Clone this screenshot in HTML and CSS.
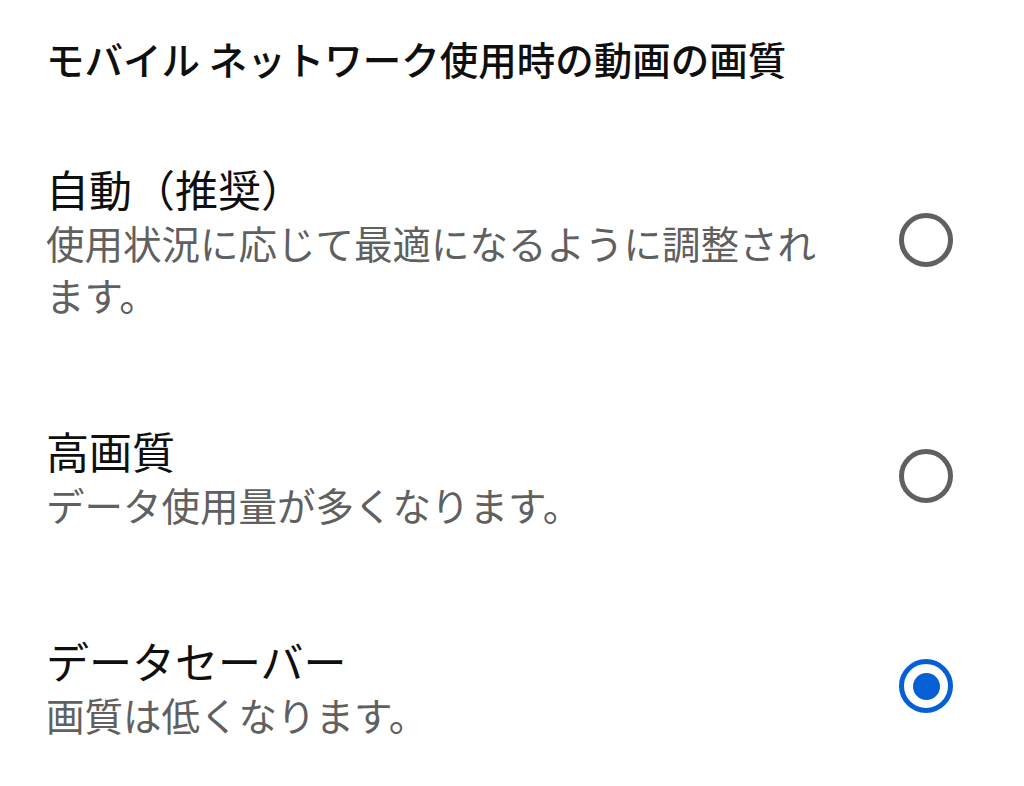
FILE: index.html
```html
<!DOCTYPE html>
<html lang="ja">
<head>
    <meta charset="UTF-8">
    <meta name="viewport" content="width=device-width, initial-scale=1.0">
    <title>動画の画質</title>
    <link rel="stylesheet" href="styles.css">
</head>
<body>

    <h1 class="section-title">モバイル ネットワーク使用時の動画の画質</h1>

    <div class="option-list">
        <label class="option">
            <div class="option-text">
                <div class="option-title">自動（推奨）</div>
                <div class="option-desc">使用状況に応じて最適になるように調整されます。</div>
            </div>
            <span class="radio"></span>
        </label>

        <label class="option">
            <div class="option-text">
                <div class="option-title">高画質</div>
                <div class="option-desc">データ使用量が多くなります。</div>
            </div>
            <span class="radio"></span>
        </label>

        <label class="option">
            <div class="option-text">
                <div class="option-title">データセーバー</div>
                <div class="option-desc">画質は低くなります。</div>
            </div>
            <!-- option sélectionnée -->
            <span class="radio checked"></span>
        </label>
    </div>

</body>
</html>
```

FILE: styles.css
```css
body {
    font-family: "Noto Sans CJK JP", "Noto Sans", sans-serif;
    background-color: #ffffff;
    color: #0f0f0f;
    margin: 0;
    padding: 0;
}

.section-title {
    font-size: 38.5px;
    font-weight: 500;
    line-height: 50px;
    margin: 0;
    padding: 33px 46px 26px;
}

.option {
    display: flex;
    align-items: center;
    padding: 51px 71px 51px 46px;
    cursor: pointer;
}

.option-text {
    flex: 1;
    margin-right: 73px;
}

.option-title {
    font-size: 43px;
    line-height: 56px;
}

.option-desc {
    font-size: 38.5px;
    line-height: 52px;
    color: #606060;
}

/* Bouton radio rond */
.radio {
    width: 54px;
    height: 54px;
    box-sizing: border-box;
    border: 5px solid #606060;
    border-radius: 50%;
    display: flex;
    align-items: center;
    justify-content: center;
    flex-shrink: 0;
}

.radio.checked {
    border-color: #065fd4;
}

.radio.checked::after {
    content: "";
    width: 27px;
    height: 27px;
    border-radius: 50%;
    background-color: #065fd4;
}
```
